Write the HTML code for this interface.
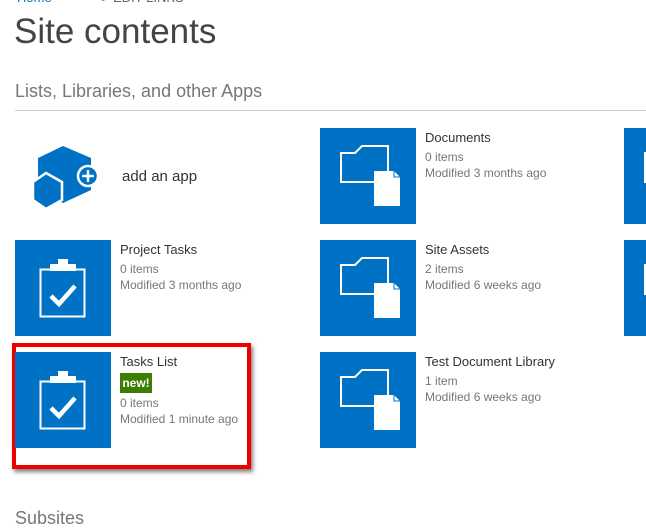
<!DOCTYPE html>
<html><head><meta charset="utf-8"><style>
body{margin:0;width:646px;height:531px;overflow:hidden;background:#fff;font-family:"Segoe UI","Liberation Sans",sans-serif;position:relative}
.a{position:absolute;white-space:nowrap}
.tile{position:absolute;width:96px;height:96px;background:#0072c6;overflow:hidden}
.t{font-size:13px;color:#333}
.g{font-size:12px;color:#777}
</style></head><body>
<div class="a" style="left:17px;top:-10px;font-size:13px;color:#0072c6">Home</div>
<div class="a" style="left:95px;top:-10px;font-size:13px;color:#666">✎ &nbsp;EDIT LINKS</div>
<div class="a" style="left:14px;top:12px;font-size:35px;color:#444">Site contents</div>
<div class="a" style="left:15px;top:81px;font-size:18px;color:#777">Lists, Libraries, and other Apps</div>
<div class="a" style="left:15px;top:110px;width:631px;height:1px;background:#ccc"></div>

<svg class="a" style="left:30px;top:140px" width="80" height="70">
<polygon points="33,6 61,18 61,50 33,63 8,50 8,18" fill="#0072c6"/>
<polygon points="16,33 32,42 32,60 16,69 3,60 3,42" fill="#0072c6" stroke="#fff" stroke-width="2.5"/>
<circle cx="58" cy="36" r="10" fill="#0072c6" stroke="#fff" stroke-width="2.5"/>
<path d="M58,30v12M52,36h12" stroke="#fff" stroke-width="2.5"/>
</svg>
<div class="a" style="left:122px;top:168px;font-size:15px;color:#333">add an app</div>

<svg width="0" height="0" style="position:absolute"><defs>
<g id="clip"><rect x="25.5" y="29.5" width="44" height="47" fill="none" stroke="#fff" stroke-width="2"/><rect x="35" y="24" width="26" height="7" fill="#fff"/><rect x="43" y="19" width="10" height="6" fill="#fff"/><path d="M36,56 L44,64 L60,46" fill="none" stroke="#fff" stroke-width="4.5"/></g>
<g id="fold"><path d="M21,54 V25 H35 L42,18 H68 V54 Z" fill="none" stroke="#fff" stroke-width="2"/><path d="M54,43 H74 L80,49 V78 H54 Z" fill="#fff"/><path d="M74,43 V49 H80" fill="none" stroke="#0072c6" stroke-width="1"/></g>
</defs></svg>

<div class="tile" style="left:15px;top:240px"><svg width="96" height="96"><use href="#clip"/></svg></div>
<div class="a t" style="left:120px;top:242px">Project Tasks</div>
<div class="a g" style="left:120px;top:262px">0 items</div>
<div class="a g" style="left:120px;top:278px">Modified 3 months ago</div>

<div class="a" style="left:12px;top:343px;width:231px;height:118px;border:4px solid #e00;box-shadow:2px 3px 4px rgba(0,0,0,.5)"></div>
<div class="tile" style="left:15px;top:352px"><svg width="96" height="96"><use href="#clip"/></svg></div>
<div class="a t" style="left:120px;top:354px">Tasks List</div>
<div class="a" style="left:120px;top:373px;width:32px;height:20px;background:#3a7f00;color:#fff;font-size:12px;font-weight:bold;line-height:20px;text-align:center">new!</div>
<div class="a g" style="left:120px;top:396px">0 items</div>
<div class="a g" style="left:120px;top:412px">Modified 1 minute ago</div>

<div class="tile" style="left:320px;top:128px"><svg width="96" height="96"><use href="#fold"/></svg></div>
<div class="a t" style="left:425px;top:130px">Documents</div>
<div class="a g" style="left:425px;top:150px">0 items</div>
<div class="a g" style="left:425px;top:166px">Modified 3 months ago</div>

<div class="tile" style="left:320px;top:240px"><svg width="96" height="96"><use href="#fold"/></svg></div>
<div class="a t" style="left:425px;top:242px">Site Assets</div>
<div class="a g" style="left:425px;top:262px">2 items</div>
<div class="a g" style="left:425px;top:278px">Modified 6 weeks ago</div>

<div class="tile" style="left:320px;top:352px"><svg width="96" height="96"><use href="#fold"/></svg></div>
<div class="a t" style="left:425px;top:354px">Test Document Library</div>
<div class="a g" style="left:425px;top:374px">1 item</div>
<div class="a g" style="left:425px;top:390px">Modified 6 weeks ago</div>

<div class="tile" style="left:624px;top:128px;width:22px"><svg width="96" height="96"><use href="#fold"/></svg></div>
<div class="tile" style="left:624px;top:240px;width:22px"><svg width="96" height="96"><use href="#fold"/></svg></div>

<div class="a" style="left:15px;top:508px;font-size:18px;color:#777">Subsites</div>
</body></html>
